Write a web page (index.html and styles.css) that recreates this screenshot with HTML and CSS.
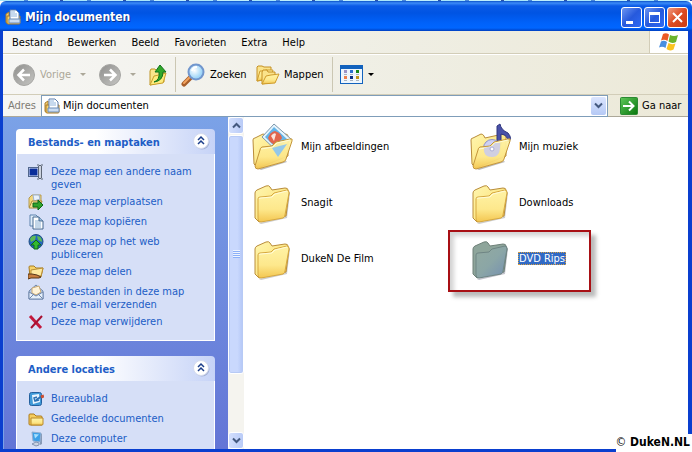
FILE: index.html
```html
<!DOCTYPE html>
<html lang="nl">
<head>
<meta charset="utf-8">
<title>Mijn documenten</title>
<link rel="stylesheet" href="styles.css">
</head>
<body>
<svg class="defs" aria-hidden="true">
  <defs>
    <linearGradient id="gold" x1="0" y1="0" x2="1" y2="1"><stop offset="0" stop-color="#fff6b0"/><stop offset=".5" stop-color="#fde98a"/><stop offset="1" stop-color="#eeb93c"/></linearGradient>
    <linearGradient id="goldfront" x1="0" y1="0" x2="0" y2="1"><stop offset="0" stop-color="#fff3a6"/><stop offset=".6" stop-color="#fde88c"/><stop offset="1" stop-color="#f3c650"/></linearGradient>
    <linearGradient id="greyfront" x1="0" y1="0" x2="1" y2="1"><stop offset="0" stop-color="#93aaa0"/><stop offset=".5" stop-color="#8ba6a6"/><stop offset="1" stop-color="#748fb2"/></linearGradient>
    <linearGradient id="round" x1="0" y1="0" x2="1" y2="1"><stop offset="0" stop-color="#8f8f8d"/><stop offset="1" stop-color="#c6c6c3"/></linearGradient>
    <linearGradient id="green" x1="0" y1="0" x2="1" y2="1"><stop offset="0" stop-color="#5fc85a"/><stop offset="1" stop-color="#08750c"/></linearGradient>
    <radialGradient id="lens" cx=".4" cy=".4"><stop offset="0" stop-color="#fff"/><stop offset="1" stop-color="#9fd6f8"/></radialGradient>
    <symbol id="docs" viewBox="0 0 16 16">
      <path d="M1 5l3-2v10l-2 1q-1 0-1-1z" fill="#f3cf74" stroke="#a87c2c"/>
      <path d="M2 7h13v7q0 1-1 1H3q-1 0-1-1z" fill="#f8d36a" stroke="#ad7b24"/>
      <path d="M5 1h6l3 3v8H5z" fill="#fff" stroke="#5d7fae"/>
      <path d="M6 3h4M6 5h6M6 7h6" stroke="#8fb4dd"/>
      <path d="M4 10h11v4H4z" fill="#c9dcf3" stroke="#6d8cb6"/>
    </symbol>
    <symbol id="folder" viewBox="-1 -1 48 48">
      <path d="M10 44l26-6 4-26 1 2-3 25-26 6z" fill="#999" opacity=".5"/>
      <path d="M6 14q0-2 2-3l9-4q3-1 4 1l2 3 13-2q3 0 3 2l1 3-3 23-27 6-4-4z" fill="url(#gold)" stroke="#b98c3a"/>
      <path d="M9 20q0-2 2-2l11-1 3-3 13-3q2 0 2 3l-4 22q0 2-2 3L12 43q-3 0-3-3z" fill="url(#goldfront)" stroke="#d6a840"/>
      <path d="M10 20q0-1 2-1l11-1 3-3 12-3" fill="none" stroke="#fffbd8"/>
    </symbol>
    <symbol id="folder-selected" viewBox="-1 -1 48 48">
      <path d="M10 44l26-6 4-26 1 2-3 25-26 6z" fill="#889" opacity=".5"/>
      <path d="M6 14q0-2 2-3l9-4q3-1 4 1l2 3 13-2q3 0 3 2l1 3-3 23-27 6-4-4z" fill="#8ea59b" stroke="#6e8078"/>
      <path d="M9 20q0-2 2-2l11-1 3-3 13-3q2 0 2 3l-4 22q0 2-2 3L12 43q-3 0-3-3z" fill="url(#greyfront)" stroke="#6f8584"/>
    </symbol>
    <symbol id="open-back" viewBox="0 0 48 48">
      <path d="M4 17q0-2 2-2l8-4q2 0 3 2l1 2 18-4q3 0 3 2v20L9 45l-4-4z" fill="url(#gold)" stroke="#b98c3a"/>
    </symbol>
    <symbol id="open-front" viewBox="0 0 48 48">
      <path d="M10 46l27-8 1 1-26 8z" fill="#777" opacity=".5"/>
      <path d="M11 27q0-2 2-3l10-1 4-4 14-3q3-1 2 2l-6 18q0 2-3 3L9 46q-3 0-3-3z" fill="url(#goldfront)" fill-opacity=".94" stroke="#c4953a"/>
      <path d="M12 26l12-2 4-4 13-3" fill="none" stroke="#fffbd8"/>
    </symbol>
    <symbol id="chevrons" viewBox="0 0 18 18">
      <circle cx="10" cy="10" r="7.500" fill="#8c9bc0" opacity=".6"/>
      <circle cx="9" cy="9" r="7.500" fill="#fff" stroke="#d5dbee"/>
      <path d="M6 8l3-3 3 3M6 12l3-3 3 3" fill="none" stroke="#1c3e8a" stroke-width="1.500"/>
    </symbol>
    <symbol id="smallfolder" viewBox="0 0 16 16">
      <path d="M1 4q0-1 1-1h4l2 2h5q1 0 1 1v8H2q-1 0-1-1z" fill="#f5cd5f" stroke="#ad7b1c"/>
      <path d="M3 7h12v6q0 1-1 1H3z" fill="url(#goldfront)" stroke="#b98a2a"/>
    </symbol>
  </defs>
</svg>

<div class="window">
  <div class="backdrop"></div>
  <header class="titlebar">
    <svg class="icon16"><use href="#docs"/></svg>
    <h1>Mijn documenten</h1>
    <div class="controls">
      <button class="control" aria-label="Minimaliseren"><svg viewBox="0 0 19 19"><path d="M4 13h7v3H4z" fill="#fff"/></svg></button>
      <button class="control" aria-label="Maximaliseren"><svg viewBox="0 0 19 19"><path d="M4 4h11v11H4zM5 7v7h9V7z" fill="#fff" fill-rule="evenodd"/></svg></button>
      <button class="control close" aria-label="Sluiten"><svg viewBox="0 0 19 19"><path d="M5 5l9 9M14 5l-9 9" stroke="#fff" stroke-width="2"/></svg></button>
    </div>
  </header>

  <div class="frame">
    <div class="menurow">
      <nav class="menu">
        <button>Bestand</button><button>Bewerken</button><button>Beeld</button><button>Favorieten</button><button>Extra</button><button>Help</button>
      </nav>
      <div class="brand">
        <svg viewBox="0 0 20 18" width="20" height="18">
          <path d="M4 1q3-1.500 6 .500L8.500 8q-3-2-6.500-.500z" fill="#ea5a24"/>
          <path d="M11 2q4 2 8 0l-2 7q-4 2-7.500-.500z" fill="#6bb32c"/>
          <path d="M2 8.500q3-1.500 6 .500l-1.500 6q-3-2-6.500-.500z" fill="#4a8fe0"/>
          <path d="M9.500 10q3 2 7 .500l-2 6q-4 2-7-.500z" fill="#fbc321"/>
        </svg>
      </div>
    </div>

    <div class="toolbar">
      <button class="tool disabled back"><svg width="24" height="24" viewBox="0 0 24 24"><circle cx="12" cy="12" r="10.500" fill="url(#round)" stroke="#a7a7a4"/><path d="M18 12H7M12 6.500L6.500 12l5.500 5.500" fill="none" stroke="#fff" stroke-width="2.500"/></svg><span>Vorige</span></button>
      <button class="drop disabled" aria-label="Vorige locaties"></button>
      <button class="tool disabled" aria-label="Volgende"><svg width="24" height="24" viewBox="0 0 24 24"><circle cx="12" cy="12" r="10.500" fill="url(#round)" stroke="#a7a7a4"/><path d="M6 12h11M12 6.500l5.500 5.500-5.500 5.500" fill="none" stroke="#fff" stroke-width="2.500"/></svg></button>
      <button class="drop disabled" aria-label="Volgende locaties"></button>
      <button class="tool" aria-label="Bovenliggende map"><svg width="22" height="24" viewBox="0 0 22 24">
        <path d="M2 22V8l1-2h4l2 2h7v11z" fill="#fbe58b" stroke="#bf9526"/>
        <path d="M2 22l4-9 5-1 7-2-3 10z" fill="#fdeb7c" stroke="#caa02c"/>
        <path d="M6 19q6-2 5-10H7l5-7 6 7h-3q0 9-9 10z" fill="#31a82a" stroke="#12731a"/>
      </svg></button>
      <i class="separator"></i>
      <button class="tool search"><svg width="25" height="24" viewBox="0 0 25 24">
        <path d="M9 15l-6 6" stroke="#a85f2b" stroke-width="5" stroke-linecap="round"/>
        <path d="M9 14l-6 6" stroke="#f3a35e" stroke-width="2" stroke-linecap="round"/>
        <circle cx="15" cy="9" r="7.500" fill="url(#lens)" stroke="#7196cd" stroke-width="2"/>
        <path d="M11 8q1-4 5-4" fill="none" stroke="#fff" stroke-width="2"/>
      </svg><span>Zoeken</span></button>
      <button class="tool folders"><svg width="24" height="22" viewBox="0 0 24 22">
        <path d="M1 17V3l1-1h4l2 1h7v12z" fill="#fae38a" stroke="#c59022"/>
        <path d="M1 17l3-10h4l2-1h7l-2 8z" fill="url(#goldfront)" stroke="#cf9c2c"/>
        <path d="M6 20V8l1-2h4l1 2h7v10z" fill="#fae38a" stroke="#c59022"/>
        <path d="M6 20l4-8 5-1 8-1-4 9z" fill="url(#goldfront)" stroke="#cf9c2c"/>
      </svg><span>Mappen</span></button>
      <i class="separator"></i>
      <button class="tool views" aria-label="Weergaven"><svg width="24" height="20" viewBox="0 0 24 20">
        <rect x=".5" y=".5" width="22" height="18" fill="#eef6fd" stroke="#1262bd"/>
        <path d="M0 0h23v4H0z" fill="#1262bd"/>
        <path d="M4 5h3v3H4z" fill="#9c94c6"/><path d="M10 5h3v3h-3z" fill="#2a6fd0"/><path d="M16 5h3v3h-3z" fill="#15881b"/>
        <path d="M4 11h3v3H4z" fill="#ee7f4c"/><path d="M10 11h3v3h-3z" fill="#0a2e86"/><path d="M16 11h3v3h-3z" fill="#c2941c"/>
        <path d="M4 9.500h3M10 9.500h3M16 9.500h3M4 15.500h3M10 15.500h3M16 15.500h3" stroke="#a9b3bf"/>
      </svg></button>
      <button class="drop" aria-label="Weergave kiezen"></button>
    </div>

    <div class="addressbar">
      <label for="address">Adres</label>
      <div class="combo">
        <svg class="icon16"><use href="#docs"/></svg>
        <input id="address" type="text" value="Mijn documenten">
        <button class="arrowbox" aria-label="Adressen tonen"><svg width="9" height="7" viewBox="0 0 9 7"><path d="M1 1.500l3.500 3.500L8 1.500" fill="none" stroke="#44597f" stroke-width="2"/></svg></button>
      </div>
      <button class="go"><svg width="18" height="18" viewBox="0 0 18 18"><rect x=".5" y=".5" width="17" height="17" rx="1" fill="url(#green)" stroke="#2c8a33"/><path d="M3 9h10M9 4.500L13.500 9 9 13.500" fill="none" stroke="#fff" stroke-width="2"/></svg><span>Ga naar</span></button>
    </div>

    <div class="content">
      <aside class="sidebar">
        <section class="panel">
          <header><h2>Bestands- en maptaken</h2><button aria-label="Inklappen"><svg width="18" height="18"><use href="#chevrons"/></svg></button></header>
          <ul>
            <li><svg viewBox="0 0 16 16"><path d="M1 4h9v8H1z" fill="#0a2e9a" stroke="#e8eefc"/><path d="M0 3.500h11M0 12.500h11M.5 3v10" stroke="#51678e"/><path d="M9 1h2l1 1 1-1h2M9 15h2l1-1 1 1h2" fill="none" stroke="#5d6675"/><path d="M12 2v12" stroke="#5d6675" stroke-width="4"/><path d="M12 2v12" stroke="#cdd4e0" stroke-width="2"/></svg><a href="#">Deze map een andere naam geven</a></li>
            <li><svg viewBox="0 0 16 16"><path d="M1 4l3-3h9v12H1z" fill="#f3d77c" stroke="#b59a50"/><path d="M5 1h6l1 4-6 2z" fill="#e9f1fb" stroke="#9db2ce"/><path d="M1 14l3-7h10l-2 7z" fill="#fae597" stroke="#a98c3b"/><path d="M5 9h5V6l5 5-5 5v-3H5z" fill="#2fa32c" stroke="#0b6418"/></svg><a href="#">Deze map verplaatsen</a></li>
            <li><svg viewBox="0 0 16 16"><path d="M2 1h6l3 3v8H2z" fill="#dfecfa" stroke="#5e83ad"/><path d="M5 3h6l4 4v8H5z" fill="#fff" stroke="#44698f"/><path d="M7 7h4M7 9h6M7 11h6M7 13h6" stroke="#86aed2"/><path d="M11 3v4h4" fill="#9ebfdf" stroke="#44698f"/></svg><a href="#">Deze map kopiëren</a></li>
            <li><svg viewBox="0 0 16 16"><circle cx="8" cy="7.500" r="7" fill="#2268bd" stroke="#234f83"/><path d="M2 5q2-4 6-3l-1 4-4 2zM9 2q5 0 5 6l-4-2z" fill="#5fba55"/><path d="M8 6l5 5h-3v4H6v-4H3z" fill="#34b92f" stroke="#0d681c"/></svg><a href="#">Deze map op het web publiceren</a></li>
            <li><svg viewBox="0 0 16 16"><path d="M1 3q0-1 1-1h4l2 2h7l-2 9H2z" fill="#f7d46a" stroke="#a77c22"/><path d="M3 6l12-2-2 8H3z" fill="#feeaa0" stroke="#b88e36"/><path d="M0 10h4l5 1 4 2-2 1H3l-3 1z" fill="#c87e3e" stroke="#593818"/></svg><a href="#">Deze map delen</a></li>
            <li><svg viewBox="0 0 16 16"><path d="M1 7l7-6 7 6v8H1z" fill="#b5cae8" stroke="#7188ad"/><path d="M4 4l7-2 2 6-5 3-4-2z" fill="#fff3d8" stroke="#c9a973"/><path d="M1 8l7 4 7-4v7H1z" fill="#e6f0fb" stroke="#7188ad"/><path d="M1 15l5-5M15 15l-5-5" stroke="#7188ad"/></svg><a href="#">De bestanden in deze map per e-mail verzenden</a></li>
            <li><svg viewBox="0 0 16 16"><path d="M2 2l11 12" stroke="#c2183c" stroke-width="3"/><path d="M14 2L3 14" stroke="#a80f30" stroke-width="2"/></svg><a href="#">Deze map verwijderen</a></li>
          </ul>
        </section>
        <section class="panel">
          <header><h2>Andere locaties</h2><button aria-label="Inklappen"><svg width="18" height="18"><use href="#chevrons"/></svg></button></header>
          <ul>
            <li><svg viewBox="0 0 16 16"><rect x="1.500" y="1.500" width="12" height="13" rx="2" fill="#3f9ad8" stroke="#24609e"/><path d="M4 4l7-1 1 8-7 2z" fill="#eaf5fe"/><path d="M9 6l-3 1 1 3 4-1" fill="none" stroke="#2c72b4" stroke-width="1.500"/><path d="M8 9l6-4" stroke="#2c72b4" stroke-width="2"/><path d="M13 6l3-1" stroke="#cc5033" stroke-width="3"/></svg><a href="#">Bureaublad</a></li>
            <li><svg viewBox="0 0 16 16"><use href="#smallfolder"/></svg><a href="#">Gedeelde documenten</a></li>
            <li><svg viewBox="0 0 16 16"><path d="M12 2l2 1v10l-2 1z" fill="#8799b5"/><path d="M4 1l9 1-1 9-7-1z" fill="#3ba0e8" stroke="#93aed0"/><path d="M6 3l5 .5-4 4z" fill="#a9e0fd"/><path d="M8 11l3 1v2l-3 1-4-2z" fill="#ccd5e4" stroke="#8293b1"/></svg><a href="#">Deze computer</a></li>
          </ul>
        </section>
      </aside>

      <div class="scrollbar">
        <button aria-label="Omhoog"><svg width="9" height="7" viewBox="0 0 9 7"><path d="M1 5.500L4.500 2 8 5.500" fill="none" stroke="#44597f" stroke-width="2"/></svg></button>
        <div class="thumb"><i class="grip"></i></div>
        <div class="track"></div>
        <button aria-label="Omlaag"><svg width="9" height="7" viewBox="0 0 9 7"><path d="M1 1.500l3.500 3.500L8 1.500" fill="none" stroke="#44597f" stroke-width="2"/></svg></button>
      </div>

      <main class="files">
        <div class="file"><svg viewBox="-1 -1 48 48"><use href="#open-back" width="48" height="48"/><path d="M13 14L25 1l17 15-12 14z" fill="#e5f4fd" stroke="#7e97ab"/><path d="M16 14l9-10 13 12-9 11z" fill="#64b4e8"/><path d="M19 15q2-6 7-7 6 2 7 7l-5 7q-7-1-9-7z" fill="#e1654c"/><path d="M22 13q3-4 5-2l-2 7z" fill="#fbe4dc"/><use href="#open-front" width="48" height="48"/><path d="M23 25l15-4-9 13z" fill="#94c8ea"/></svg><span>Mijn afbeeldingen</span></div>
        <div class="file"><svg viewBox="-1 -1 48 48"><use href="#open-back" width="48" height="48"/><path d="M30 20V3l3-2q1 6 8 9 5 6 0 9 0-7-7-8v10q-2 5-8 4-3-4 4-5z" fill="#4951a8" stroke="#30377f"/><circle cx="25" cy="25" r="8.500" fill="#cdd0f3" stroke="#9093c7"/><use href="#open-front" width="48" height="48"/><path d="M17 25l8-2 3-3h5q1 14-8 14t-8-9z" fill="#cbcce9" opacity=".9"/><circle cx="25" cy="26" r="2" fill="#fff" stroke="#a9abd2"/></svg><span>Mijn muziek</span></div>
        <div class="file"><svg viewBox="0 0 48 48"><use href="#folder"/></svg><span>Snagit</span></div>
        <div class="file"><svg viewBox="0 0 48 48"><use href="#folder"/></svg><span>Downloads</span></div>
        <div class="file"><svg viewBox="0 0 48 48"><use href="#folder"/></svg><span>DukeN De Film</span></div>
        <div class="file selected"><svg viewBox="0 0 48 48"><use href="#folder-selected"/></svg><span>DVD Rips</span><i class="highlight"></i></div>
      </main>
    </div>
  </div>
  <p class="credit"><span>©</span> DukeN.NL</p>
</div>
</body>
</html>
```
FILE: styles.css
```css
* { box-sizing: border-box; }

body {
  margin: 0;
  font: 11px/13px "DejaVu Sans Condensed", "DejaVu Sans", sans-serif;
  color: #000;
}

h1, h2, p, ul { margin: 0; padding: 0; }
ul { list-style: none; }

button {
  display: flex;
  align-items: center;
  margin: 0;
  padding: 0;
  border: 0;
  background: none;
  font: inherit;
  color: inherit;
}

svg { display: block; flex: none; }
.defs { position: absolute; width: 0; height: 0; }
.icon16 { width: 16px; height: 16px; }

.window {
  position: relative;
  display: flex;
  flex-direction: column;
  height: 100vh;
  overflow: hidden;
}

.backdrop {
  flex: none;
  height: 1px;
  background: repeating-linear-gradient(90deg, #a8e6fa 0 24px, #4a86d8 24px 28px, #bdeefc 28px 60px, #2b50a8 60px 63px);
}

/* Title bar */
.titlebar {
  flex: none;
  display: flex;
  align-items: center;
  gap: 4px;
  height: 30px;
  padding: 2px 4px 0 5px;
  border-radius: 6px 6px 0 0;
  background: linear-gradient(#0a50c8 0, #3c8cf8 2px, #0a5ae6 5px, #0054e3 12px, #0062fa 22px, #0066ff 27px, #003fc0 30px);
}

.titlebar h1 {
  flex: 1;
  font: bold 12px/18px "DejaVu Sans Condensed", "DejaVu Sans", sans-serif;
  color: #fff;
  text-shadow: 1px 1px #0b2f86;
}

.controls { display: flex; gap: 2px; }

.control {
  width: 21px;
  height: 21px;
  border: 1px solid #fff;
  border-radius: 3px;
  background: linear-gradient(135deg, #6d96f2, #2659dc 50%, #2f6af4);
}

.control.close { background: linear-gradient(135deg, #f09a80, #dc4a22 50%, #c83c14); }

.frame {
  flex: 1;
  display: flex;
  flex-direction: column;
  min-height: 0;
  border: solid #0a3fcf;
  border-width: 0 4px 3px 3px;
}

/* Menu */
.menurow {
  flex: none;
  display: flex;
  height: 23px;
  border-bottom: 1px solid #d2cdb8;
  background: linear-gradient(90deg, #f6f6f4, #efeee3 60%, #ece9d8);
}

.menu {
  flex: 1;
  display: flex;
  gap: 15px;
  padding-left: 9px;
}

.brand {
  display: flex;
  align-items: center;
  justify-content: center;
  width: 39px;
  border-left: 1px solid #d2cdb8;
  background: #fff;
}

/* Toolbar */
.toolbar {
  flex: none;
  display: flex;
  align-items: center;
  height: 41px;
  padding-left: 9px;
  border-top: 1px solid #fff;
  border-bottom: 1px solid #d2cdb8;
  background: linear-gradient(90deg, #f6f6f4, #efeee3 60%, #ece9d8);
}

.tool { gap: 4px; }
.disabled { color: #aca899; }
.back { width: 60px; }
.search { width: 75px; }
.folders { width: 71px; }

.drop {
  justify-content: center;
  width: 14px;
  height: 24px;
}

.drop::before {
  content: "";
  border: 3px solid transparent;
  border-top-color: currentColor;
  border-bottom: 0;
}

.drop.disabled { width: 22px; margin-right: 4px; }

.separator {
  width: 1px;
  height: 35px;
  margin: 0 5px;
  background: #cbc7b3;
}

.views { margin-left: 2px; }

/* Address bar */
.addressbar {
  flex: none;
  display: flex;
  align-items: center;
  height: 22px;
  border-bottom: 1px solid #aca899;
  background: linear-gradient(90deg, #f6f6f4, #efeee3 60%, #ece9d8);
}

.addressbar label {
  width: 38px;
  padding-left: 5px;
  color: #7f7c73;
}

.combo {
  flex: 1;
  display: flex;
  align-items: center;
  height: 22px;
  min-width: 0;
  padding: 0 1px 0 2px;
  border: 1px solid #7f9db9;
  background: #fff;
}

.combo input {
  flex: 1;
  min-width: 0;
  padding: 0 3px;
  border: 0;
  background: none;
  font: inherit;
  color: inherit;
}

.arrowbox {
  justify-content: center;
  width: 15px;
  height: 18px;
  border-radius: 2px;
  background: linear-gradient(#dbe5fe, #b5c9f5);
}

.go {
  gap: 4px;
  width: 68px;
  margin-left: 12px;
}

/* Content */
.content {
  flex: 1;
  display: flex;
  min-height: 0;
  background: #fff;
}

.sidebar {
  flex: none;
  display: flex;
  flex-direction: column;
  gap: 15px;
  width: 225px;
  padding: 12px 13px 0 12px;
  overflow: hidden;
  border-left: 1px solid #7ba2e7;
  background: linear-gradient(#7ba2e7, #6375d6);
}

.panel { flex: none; }

.panel header {
  display: flex;
  align-items: center;
  justify-content: space-between;
  height: 25px;
  padding: 0 5px 2px 12px;
  border-radius: 4px 4px 0 0;
  background: linear-gradient(90deg, #fff 40%, #c6d3f7);
}

.panel h2 {
  padding-top: 4px;
  font: bold 11px/14px "DejaVu Sans Condensed", "DejaVu Sans", sans-serif;
  color: #215dc6;
}

.panel ul {
  display: flex;
  flex-direction: column;
  gap: 4px;
  padding: 11px 16px 9px 11px;
  border: solid #fff;
  border-width: 0 1px 1px;
  background: #d6dff7;
}

.panel li {
  display: flex;
  gap: 7px;
  min-height: 16px;
}

.panel li svg { width: 16px; height: 16px; margin-top: -1px; }
.panel li a { color: #215dc6; text-decoration: none; }

/* Scroll bar */
.scrollbar {
  flex: none;
  display: flex;
  flex-direction: column;
  width: 16px;
  background: #f5f4ef;
}

.scrollbar button {
  justify-content: center;
  height: 17px;
  border: 1px solid #fff;
  border-radius: 3px;
  background: linear-gradient(90deg, #d3dffd, #b9cbf7);
}

.thumb {
  flex: 239;
  display: flex;
  align-items: center;
  justify-content: center;
  margin-top: 1px;
  border: 1px solid #fff;
  border-radius: 3px;
  background: linear-gradient(90deg, #c9d8fd 60%, #b3c6f6);
  box-shadow: inset 0 0 0 1px #b7caf5;
}

.grip {
  width: 7px;
  height: 8px;
  background: repeating-linear-gradient(#eef4fe 0 1px, #8cb0f8 1px 2px);
}

.track { flex: 59; }

/* Files */
.files {
  flex: 1;
  display: grid;
  grid-template-columns: repeat(auto-fill, 218px);
  grid-auto-rows: 48px;
  gap: 8px 0;
  align-content: start;
  padding: 5px 4px;
}

.file {
  position: relative;
  display: flex;
  align-items: center;
  gap: 4px;
}

.file > svg { width: 48px; height: 48px; }
.file span { padding: 0 1px; }

.selected span {
  outline: 1px dotted #d8a040;
  outline-offset: -1px;
  background: #316ac5;
  color: #fff;
}

.highlight {
  position: absolute;
  top: -4px;
  left: -18px;
  width: 143px;
  height: 62px;
  border: 2px solid #a80f14;
  box-shadow: 5px 5px 4px #bbb, inset 4px 4px 4px #d4d4d4;
}

.credit {
  position: absolute;
  right: 0;
  bottom: 0;
  padding: 1px 2px 2px 0;
  background: #fff;
  font: bold 12px/15px "DejaVu Sans Condensed", "DejaVu Sans", sans-serif;
}

.credit span { font-weight: normal; }
```
